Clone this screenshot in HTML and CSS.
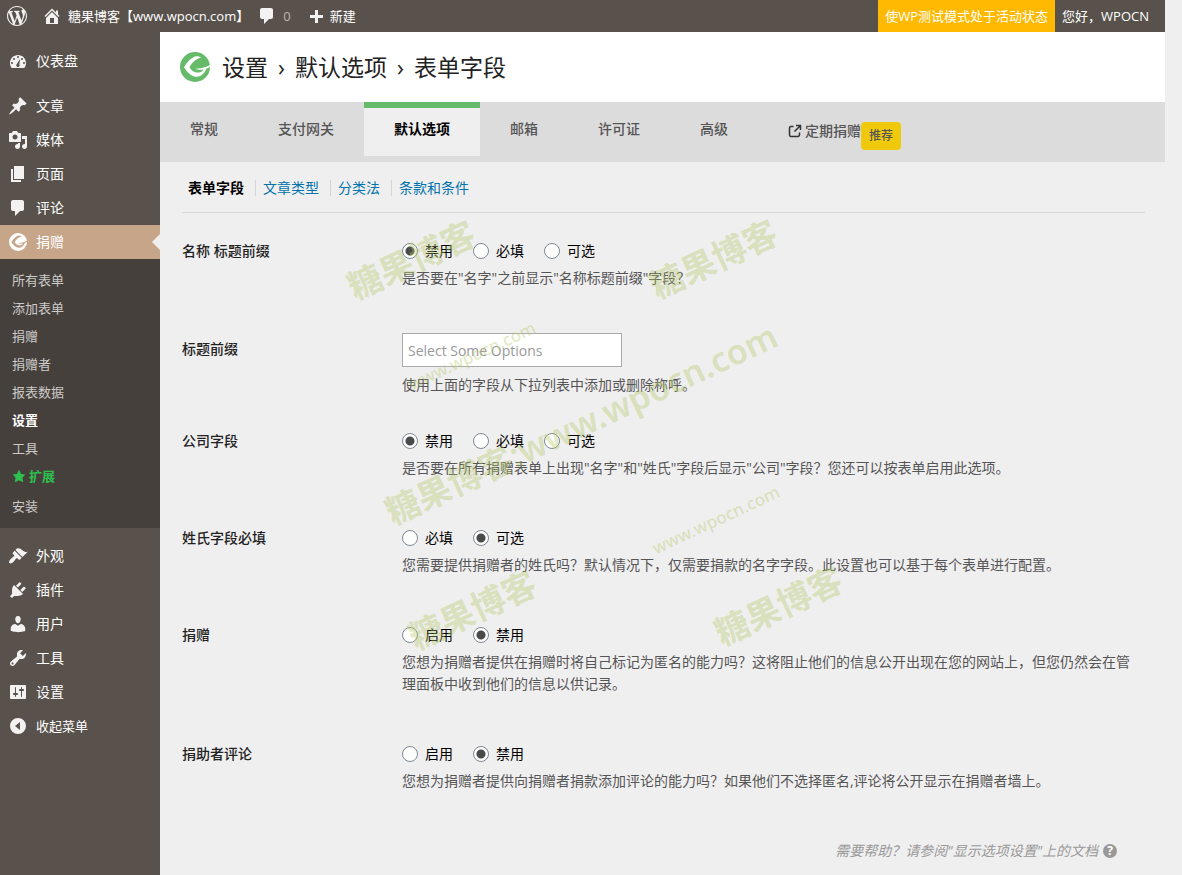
FILE: index.html
```html
<!DOCTYPE html>
<html lang="zh-CN">
<head>
<meta charset="utf-8">
<meta name="viewport" content="width=device-width, initial-scale=1">
<title>设置 › 默认选项 › 表单字段</title>
<link rel="stylesheet" href="styles.css">
</head>
<body>
<svg class="defs" aria-hidden="true">
  <symbol id="give" viewBox="0 0 30 30">
    <circle cx="15" cy="15" r="15" fill="currentColor"/>
    <path class="cut" d="M4 15C7.500 9.500 11.500 5.500 16 4.300c2-.4 3.700 0 5 1.400C15.500 7 12 10.500 9.500 15c1.500 3.300 4.700 5.500 8.300 5.500 2.700 0 4.600-1 5.600-3.100-2.900.7-5.700.6-8.300-.6 5.200 0 10.200-1.300 14.900-3.800v1.700c-1.200.9-2.400 1.600-3.700 2.100C24.500 22 20 25.400 15.500 24.700 10.500 23.800 6.700 19.800 4 15z"/>
  </symbol>
  <symbol id="comment" viewBox="0 0 20 20"><path d="M5 2h9c1.100 0 2 .9 2 2v7c0 1.100-.9 2-2 2h-2l-5 5v-5H5c-1.100 0-2-.9-2-2V4c0-1.100.9-2 2-2z"/></symbol>
  <symbol id="tools" viewBox="0 0 20 20"><path d="M16.680 9.770c-1.340 1.340-3.300 1.670-4.950.99l-5.410 6.520c-.99.99-2.590.99-3.580 0s-.99-2.590 0-3.570l6.520-5.420c-.68-1.650-.35-3.610.99-4.950 1.280-1.280 3.120-1.620 4.720-1.060l-2.890 2.890 2.820 2.820 2.860-2.870c.53 1.580.18 3.390-1.080 4.650zM3.810 16.210c.4.39 1.040.39 1.430 0 .4-.4.4-1.040 0-1.430-.39-.4-1.030-.4-1.430 0-.39.39-.39 1.030 0 1.430z"/></symbol>
</svg>

<header class="adminbar">
  <a class="bar-item bar-logo" href="#" aria-label="WordPress"><svg class="icon" viewBox="0 0 20 20"><path d="M20 10c0-5.510-4.490-10-10-10C4.480 0 0 4.490 0 10c0 5.520 4.480 10 10 10 5.510 0 10-4.480 10-10zM7.780 15.370L4.370 6.220c.55-.02 1.170-.08 1.170-.08.5-.06.44-1.130-.06-1.110 0 0-1.450.11-2.370.11-.18 0-.37 0-.58-.01C4.120 2.690 6.870 1.110 10 1.110c2.330 0 4.450.87 6.050 2.340-.68-.11-1.650.39-1.650 1.580 0 .74.45 1.360.9 2.100.35.61.55 1.360.55 2.460 0 1.490-1.400 5-1.400 5l-3.030-8.370c.54-.02.82-.17.82-.17.5-.05.44-1.250-.06-1.220 0 0-1.440.12-2.380.12-.87 0-2.330-.12-2.330-.12-.5-.03-.56 1.200-.06 1.220l.92.08 1.260 3.410zM17.410 10c.24-.64.74-1.870.43-4.250.7 1.290 1.050 2.710 1.050 4.250 0 3.290-1.730 6.240-4.400 7.780.97-2.590 1.940-5.200 2.920-7.780zM6.100 18.090C3.120 16.650 1.110 13.530 1.110 10c0-1.300.23-2.480.72-3.590C3.250 10.300 4.670 14.200 6.100 18.090zm4.030-6.630l2.580 6.980c-.86.29-1.760.45-2.710.45-.79 0-1.570-.11-2.290-.33.81-2.380 1.620-4.740 2.420-7.100z"/></svg></a>
  <a class="bar-item bar-site" href="#"><svg class="icon" viewBox="0 0 20 20"><path d="M16 8.500l1.530 1.530-1.060 1.060L10 4.600l-6.470 6.490-1.060-1.060L10 2.500l4 4v-2h2v4zm-6-2.460l6 5.990V18H4v-5.970zM12 17v-5H8v5h4z"/></svg>糖果博客【www.wpocn.com】</a>
  <a class="bar-item bar-comments" href="#"><svg class="icon"><use href="#comment"/></svg><span class="count">0</span></a>
  <a class="bar-item bar-new" href="#"><svg class="icon" viewBox="0 0 20 20"><path d="M17 9v3h-5v5H9v-5H4V9h5V4h3v5h5z"/></svg>新建</a>
  <a class="bar-item bar-test" href="#">使WP测试模式处于活动状态</a>
  <a class="bar-item bar-user" href="#">您好，WPOCN</a>
</header>

<div class="shell">
  <nav class="menu" aria-label="主菜单">
    <a class="menu-item" href="#"><svg class="icon" viewBox="0 0 20 20"><path fill-rule="evenodd" d="M3.760 17h12.480C17.340 15.630 18 13.890 18 12c0-4.410-3.580-8-8-8s-8 3.590-8 8c0 1.890.66 3.630 1.760 5zM9 6a1 1 0 1 1 2 0 1 1 0 0 1-2 0zM5 8a1 1 0 1 1 2 0 1 1 0 0 1-2 0zM13 8a1 1 0 1 1 2 0 1 1 0 0 1-2 0zM3 12a1 1 0 1 1 2 0 1 1 0 0 1-2 0zM15 12a1 1 0 1 1 2 0 1 1 0 0 1-2 0zM12.300 7.800l-1 5.500c.9 1.100.3 2.700-1.300 2.700-1.700 0-2.400-1.900-1.200-3z"/></svg>仪表盘</a>
    <div class="separator"></div>
    <a class="menu-item" href="#"><svg class="icon" viewBox="0 0 20 20"><path d="M10.440 3.020l1.820-1.820 6.360 6.350-1.830 1.820c-1.050-.68-2.480-.57-3.410.36l-.75.75c-.92.93-1.040 2.350-.35 3.410l-1.830 1.820-2.410-2.410-2.800 2.790c-.42.42-3.380 2.710-3.800 2.290s1.860-3.390 2.280-3.810l2.790-2.790L4.100 9.360l1.830-1.820c1.050.69 2.480.57 3.400-.36l.75-.75c.93-.92 1.050-2.350.36-3.410z"/></svg>文章</a>
    <a class="menu-item" href="#"><svg class="icon" viewBox="0 0 20 20"><path d="M13 11V4c0-.55-.45-1-1-1h-1.670L9 1H5L3.670 3H2c-.55 0-1 .45-1 1v7c0 .55.45 1 1 1h10c.55 0 1-.45 1-1zM7 4.500c1.380 0 2.500 1.120 2.500 2.500S8.380 9.500 7 9.500 4.500 8.380 4.500 7 5.620 4.500 7 4.500zM14 6h5v10.500c0 1.380-1.120 2.500-2.500 2.500S14 17.880 14 16.500s1.120-2.500 2.500-2.500c.17 0 .34.02.5.05V9h-3V6zm-4 8.050V13h2v3.500c0 1.380-1.120 2.500-2.500 2.500S7 17.880 7 16.500 8.120 14 9.500 14c.17 0 .34.02.5.05z"/></svg>媒体</a>
    <a class="menu-item" href="#"><svg class="icon" viewBox="0 0 20 20"><path d="M6 15V2h10v13H6zm-1 1h8v2H3V5h2v11z"/></svg>页面</a>
    <a class="menu-item" href="#"><svg class="icon"><use href="#comment"/></svg>评论</a>
    <a class="menu-item current" href="#"><svg class="icon give-small"><use href="#give"/></svg>捐赠</a>
    <div class="submenu">
      <a href="#">所有表单</a>
      <a href="#">添加表单</a>
      <a href="#">捐赠</a>
      <a href="#">捐赠者</a>
      <a href="#">报表数据</a>
      <a href="#" class="selected">设置</a>
      <a href="#">工具</a>
      <a href="#" class="addons"><svg class="star" viewBox="0 0 20 20"><path d="M10 1l3 6 6 .75-4.120 4.620L16 19l-6-3-6 3 1.130-6.630L1 7.750 7 7z"/></svg>扩展</a>
      <a href="#">安装</a>
    </div>
    <div class="separator"></div>
    <a class="menu-item" href="#"><svg class="icon" viewBox="0 0 20 20"><path d="M14.480 11.060L7.410 3.990l1.500-1.500c.5-.56 2.300-.47 3.510.32 1.210.8 1.430 1.280 2.910 2.100 1.180.64 2.450 1.260 4.450.85zm-.71.71L6.700 4.700 4.930 6.470c-.39.39-.39 1.020 0 1.410l1.060 1.060c.39.39.39 1.030 0 1.420-.6.6-1.430 1.110-2.210 1.690-.35.26-.7.53-1.010.84C1.430 14.230.4 16.080 1.400 17.070c.99 1 2.840-.03 4.180-1.360.31-.31.58-.66.85-1.020.57-.78 1.080-1.610 1.690-2.210.39-.39 1.020-.39 1.410 0l1.060 1.060c.39.39 1.020.39 1.410 0z"/></svg>外观</a>
    <a class="menu-item" href="#"><svg class="icon" viewBox="0 0 20 20"><path d="M13.110 4.360L9.870 7.600 8 5.730l3.240-3.240c.35-.34 1.050-.2 1.560.32.52.51.66 1.210.31 1.550zm-8 1.770l.91-1.120 9.010 9.010-1.190.84c-.71.71-2.630 1.160-3.820 1.160H6.140L4.900 17.260c-.59.59-1.540.59-2.120 0-.59-.58-.59-1.530 0-2.120l1.240-1.240v-3.880c0-1.130.4-3.190 1.090-3.890zm7.260 3.970l3.240-3.240c.34-.35 1.040-.21 1.550.31.52.51.66 1.210.31 1.550l-3.240 3.250z"/></svg>插件</a>
    <a class="menu-item" href="#"><svg class="icon" viewBox="0 0 20 20"><path d="M10 9.250c-2.270 0-2.730-3.440-2.730-3.440C7 4.020 7.820 2 9.970 2c2.160 0 2.980 2.020 2.710 3.810 0 0-.41 3.440-2.680 3.440zm0 2.570L12.720 10c2.390 0 4.520 2.330 4.520 4.530v2.490s-3.650 1.130-7.240 1.130c-3.650 0-7.240-1.130-7.240-1.130v-2.490c0-2.250 1.940-4.480 4.470-4.480z"/></svg>用户</a>
    <a class="menu-item" href="#"><svg class="icon"><use href="#tools"/></svg>工具</a>
    <a class="menu-item" href="#"><svg class="icon" viewBox="0 0 20 20"><path d="M18 16V4c0-.55-.45-1-1-1H3c-.55 0-1 .45-1 1v12c0 .55.45 1 1 1h14c.55 0 1-.45 1-1zM8 11h1c.55 0 1 .45 1 1s-.45 1-1 1H8v1.500c0 .28-.22.5-.5.5s-.5-.22-.5-.5V13H6c-.55 0-1-.45-1-1s.45-1 1-1h1V5.500c0-.28.22-.5.5-.5s.5.22.5.5V11zm5-2h-1c-.55 0-1-.45-1-1s.45-1 1-1h1V5.500c0-.28.22-.5.5-.5s.5.22.5.5V7h1c.55 0 1 .45 1 1s-.45 1-1 1h-1v5.500c0 .28-.22.5-.5.5s-.5-.22-.5-.5V9z"/></svg>设置</a>
    <button class="menu-item collapse" type="button"><svg class="icon" viewBox="0 0 20 20"><path fill-rule="evenodd" d="M10 2a8 8 0 1 0 0 16 8 8 0 0 0 0-16zM12 6v8l-5-4z"/></svg>收起菜单</button>
  </nav>

  <main class="content">
    <div class="page-head">
      <svg class="logo" aria-hidden="true"><use href="#give"/></svg>
      <h1 class="title"><span>设置</span><span class="crumb">›</span><span>默认选项</span><span class="crumb">›</span><span>表单字段</span></h1>
    </div>
    <nav class="tabs" aria-label="设置分组">
      <a class="tab" href="#">常规</a>
      <a class="tab" href="#">支付网关</a>
      <a class="tab active" href="#" aria-current="page">默认选项</a>
      <a class="tab" href="#">邮箱</a>
      <a class="tab" href="#">许可证</a>
      <a class="tab" href="#">高级</a>
      <a class="tab recurring" href="#"><svg class="external" viewBox="0 0 14 14"><path d="M5.500 2.500H3A1.500 1.500 0 0 0 1.500 4v7A1.500 1.500 0 0 0 3 12.500h7a1.500 1.500 0 0 0 1.500-1.500V8.500M8 1.500h4.500V6M12.500 1.500l-6 6"/></svg>定期捐赠<span class="badge">推荐</span></a>
    </nav>

    <div class="panel">
      <nav class="subtabs" aria-label="默认选项">
        <a class="here" href="#">表单字段</a><a href="#">文章类型</a><a href="#">分类法</a><a href="#">条款和条件</a>
      </nav>

      <form class="fields">
        <div class="row" role="radiogroup" aria-labelledby="l1">
          <div class="name" id="l1">名称 标题前缀</div>
          <div class="control">
            <div class="radios">
              <label><input type="radio" name="prefix" checked>禁用</label>
              <label><input type="radio" name="prefix">必填</label>
              <label><input type="radio" name="prefix">可选</label>
            </div>
            <p class="help">是否要在"名字"之前显示"名称标题前缀"字段？</p>
          </div>
        </div>
        <div class="row row-input">
          <label class="name" for="titles">标题前缀</label>
          <div class="control">
            <input class="text" id="titles" type="text" placeholder="Select Some Options">
            <p class="help">使用上面的字段从下拉列表中添加或删除称呼。</p>
          </div>
        </div>
        <div class="row" role="radiogroup" aria-labelledby="l3">
          <div class="name" id="l3">公司字段</div>
          <div class="control">
            <div class="radios">
              <label><input type="radio" name="company" checked>禁用</label>
              <label><input type="radio" name="company">必填</label>
              <label><input type="radio" name="company">可选</label>
            </div>
            <p class="help">是否要在所有捐赠表单上出现"名字"和"姓氏"字段后显示"公司"字段？您还可以按表单启用此选项。</p>
          </div>
        </div>
        <div class="row" role="radiogroup" aria-labelledby="l4">
          <div class="name" id="l4">姓氏字段必填</div>
          <div class="control">
            <div class="radios">
              <label><input type="radio" name="last">必填</label>
              <label><input type="radio" name="last" checked>可选</label>
            </div>
            <p class="help">您需要提供捐赠者的姓氏吗？默认情况下，仅需要捐款的名字字段。此设置也可以基于每个表单进行配置。</p>
          </div>
        </div>
        <div class="row" role="radiogroup" aria-labelledby="l5">
          <div class="name" id="l5">捐赠</div>
          <div class="control">
            <div class="radios">
              <label><input type="radio" name="anon">启用</label>
              <label><input type="radio" name="anon" checked>禁用</label>
            </div>
            <p class="help">您想为捐赠者提供在捐赠时将自己标记为匿名的能力吗？这将阻止他们的信息公开出现在您的网站上，但您仍然会在管理面板中收到他们的信息以供记录。</p>
          </div>
        </div>
        <div class="row" role="radiogroup" aria-labelledby="l6">
          <div class="name" id="l6">捐助者评论</div>
          <div class="control">
            <div class="radios">
              <label><input type="radio" name="comments">启用</label>
              <label><input type="radio" name="comments" checked>禁用</label>
            </div>
            <p class="help">您想为捐赠者提供向捐赠者捐款添加评论的能力吗？如果他们不选择匿名,评论将公开显示在捐赠者墙上。</p>
          </div>
        </div>
      </form>

      <a class="docs" href="#">需要帮助？请参阅"显示选项设置"上的文档<span class="question">?</span></a>
    </div>

    <div class="marks" aria-hidden="true">
      <span class="mark m1">糖果博客</span>
      <span class="mark m2">糖果博客</span>
      <span class="mark m3">糖果博客<span class="url">:www.wpocn.com</span></span>
      <span class="mark small m4">www.wpocn.com</span>
      <span class="mark small m5">www.wpocn.com</span>
      <span class="mark m6">糖果博客</span>
      <span class="mark m7">糖果博客</span>
    </div>
  </main>
</div>
</body>
</html>
```

FILE: styles.css
```css
* { box-sizing: border-box; }

body {
  display: flex;
  flex-direction: column;
  min-height: 100vh;
  margin: 0;
  padding-right: 17px;
  background: #f0eff0;
  color: #222;
  font: 14px/22px "Open Sans", "Noto Sans CJK SC", sans-serif;
}

a { color: inherit; text-decoration: none; }

.defs { position: absolute; width: 0; height: 0; }
.icon { flex: none; width: 20px; height: 20px; fill: #f3f1f1; }
.cut { fill: var(--cut); }

/* Admin bar */
.adminbar {
  display: flex;
  height: 32px;
  background: #59524c;
  color: #fff;
  font-size: 13px;
}
.bar-item { display: flex; align-items: center; white-space: nowrap; }
.bar-logo { padding: 0 7px; }
.bar-site { gap: 6px; padding: 0 0 0 8px; }
.bar-comments { gap: 6px; padding: 0 7px 0 8px; }
.bar-comments .count { color: #bbb6b2; }
.bar-new { gap: 4px; padding: 0 8px; }
.bar-test { margin-left: auto; padding: 0 7px; background: #ffb900; }
.bar-user { padding: 0 16px 0 7px; }

/* Side menu */
.shell { display: flex; flex: 1; }
.menu {
  flex: none;
  width: 160px;
  padding: 12px 0;
  background: #59524c;
  color: #fff;
}
.menu-item {
  position: relative;
  display: flex;
  align-items: center;
  gap: 8px;
  width: 100%;
  height: 34px;
  padding: 0 8px;
}
.separator { height: 11px; }
.collapse {
  border: 0;
  background: none;
  color: #fff;
  font: inherit;
  font-size: 13px;
}
.current { background: #c7a589; --cut: #c7a589; }
.current::after {
  content: "";
  position: absolute;
  top: 9px;
  right: 0;
  border: 8px solid transparent;
  border-left: 0;
  border-right-color: #f0eff0;
}
.give-small { width: 18px; height: 18px; margin: 1px; color: #fff; }

.submenu { padding: 7px 0 8px; background: #46403c; color: #cdcbc9; font-size: 13px; }
.submenu a { display: flex; align-items: center; height: 28px; padding: 0 12px; }
.submenu .selected { color: #fff; font-weight: 700; }
.submenu .addons { gap: 3px; margin-bottom: 2px; color: #2ec04f; font-weight: 600; }
.star { width: 14px; height: 14px; fill: #2ec04f; }

/* Page heading and tabs */
.content { position: relative; flex: 1; min-width: 0; }
.page-head {
  display: flex;
  align-items: center;
  gap: 12px;
  height: 70px;
  padding: 0 20px;
  background: #fff;
}
.logo { width: 30px; height: 30px; color: #66bb6a; --cut: #fff; }
.title { display: flex; margin: 0; font-size: 23px; font-weight: 400; line-height: 30px; }
.crumb { width: 27px; text-align: center; }

.tabs {
  display: flex;
  height: 60px;
  background: #dddcdd;
  color: #555;
  font-weight: 500;
}
.tab { height: 54px; padding: 16px 30px; white-space: nowrap; }
.tab.active {
  padding-top: 10px;
  border-top: 6px solid #66bb6a;
  background: #f0eff0;
  color: #000;
  font-weight: 700;
}
.tab.recurring { display: flex; align-items: flex-start; padding-top: 18px; }
.external {
  width: 14px;
  height: 14px;
  margin: 4px 3px 0 0;
  fill: none;
  stroke: #333;
  stroke-width: 1.500;
}
.badge {
  margin-top: 2px;
  padding: 3px 8px;
  border-radius: 4px;
  background: #f1c90c;
  font-size: 12px;
}

/* Settings panel */
.panel { padding: 15px 20px 13px 22px; }
.subtabs {
  display: flex;
  align-items: center;
  height: 36px;
  padding: 0 6px 14px;
  border-bottom: 1px solid #d8d8d8;
  color: #0073aa;
}
.subtabs a { line-height: 16px; }
.subtabs a + a { margin-left: 11px; padding-left: 7px; border-left: 1px solid #d5d5d5; }
.subtabs .here { color: #000; font-weight: 700; }

.fields { padding-top: 3px; }
.row { display: grid; grid-template-columns: 220px 1fr; padding: 24px 10px 24px 0; }
.row-input { padding: 20px 10px 10px 0; }
.name { font-weight: 500; }
.row-input .name { padding-top: 5px; }
.radios { display: flex; gap: 20px; color: #000; }
.radios label { display: flex; align-items: center; gap: 7px; }
.radios input {
  appearance: none;
  width: 16px;
  height: 16px;
  margin: 0;
  border: 1px solid #7e8993;
  border-radius: 50%;
  background: #fff;
}
.radios input:checked { background: radial-gradient(circle, #4a4a4a 4px, #fff 5px); }
.help { margin: 5px 0 0; color: #555; }
.text {
  display: block;
  width: 220px;
  height: 34px;
  padding: 0 5px;
  border: 1px solid #aaa;
  background: #fff;
  font: inherit;
}
.text::placeholder { color: #999; }
.row-input .help { margin-top: 7px; }

.docs {
  display: flex;
  align-items: center;
  justify-content: flex-end;
  gap: 5px;
  padding: 24px 28px 0 0;
  color: #999;
  font-style: italic;
}
.question {
  width: 14px;
  height: 14px;
  border-radius: 50%;
  background: #999;
  color: #fff;
  font-size: 12px;
  font-style: normal;
  font-weight: 700;
  line-height: 14px;
  text-align: center;
}

/* Diagonal watermarks laid over the page */
.marks { position: absolute; inset: 0; overflow: hidden; pointer-events: none; }
.mark {
  position: absolute;
  color: rgba(180, 200, 105, 0.4);
  font: 700 34px/40px "Noto Sans CJK SC", sans-serif;
  white-space: nowrap;
  transform: translate(-50%, -50%) rotate(-25deg);
}
.url, .small { font-family: "Noto Sans", sans-serif; font-weight: 600; }
.small { font-size: 17px; font-weight: 500; }
.m1 { left: 251px; top: 227px; }
.m2 { left: 553px; top: 226px; }
.m3 { left: 421px; top: 391px; }
.m4 { left: 312px; top: 324px; }
.m5 { left: 556px; top: 488px; }
.m6 { left: 312px; top: 577px; }
.m7 { left: 618px; top: 573px; }
```
